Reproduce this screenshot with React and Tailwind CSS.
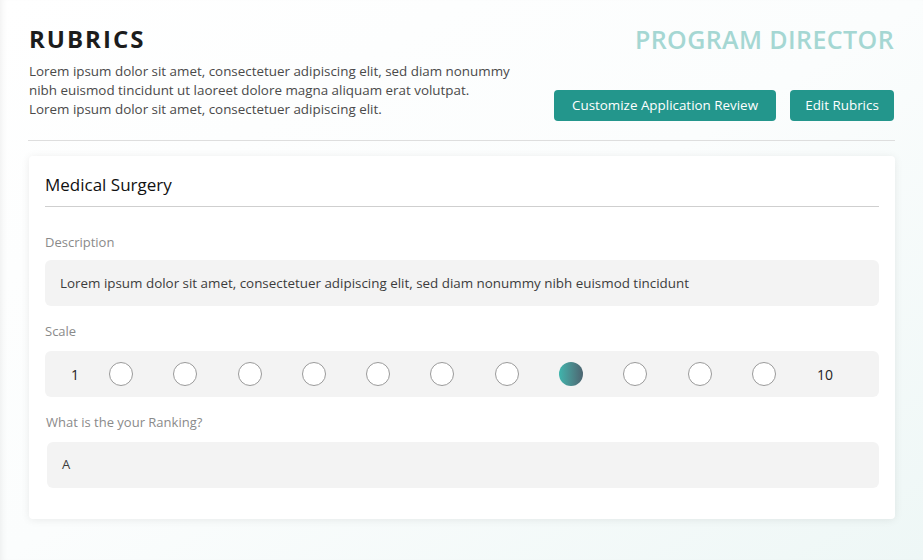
import React from "react";

const scale = [1, 2, 3, 4, 5, 6, 7, 8, 9, 10, 11];

const App = () => {
  const selected = 8;

  return (
    <div
      className="min-h-[560px] w-full bg-gradient-to-br from-white via-[#fbfdfd] to-[#eef7f6] shadow-[inset_6px_0_6px_-4px_rgba(0,0,0,0.06)]"
      style={{ fontFamily: "'Open Sans', 'Liberation Sans', sans-serif" }}
    >
      <div className="px-[28px] pt-[22px]">
        {/* Header */}
        <div className="flex justify-between">
          <div className="pl-[1px]">
            <h1 className="text-[24px] font-bold tracking-[2px] text-[#1c1c1c] leading-[34px]">
              RUBRICS
            </h1>
            <p className="mt-[6px] text-[13.4px] leading-[19px] text-[#4a4a4a] w-[520px]">
              Lorem ipsum dolor sit amet, consectetuer adipiscing elit, sed diam nonummy
              <br />
              nibh euismod tincidunt ut laoreet dolore magna aliquam erat volutpat.
              <br />
              Lorem ipsum dolor sit amet, consectetuer adipiscing elit.
            </p>
          </div>
          <div className="flex flex-col items-end pr-[1px]">
            <h2 className="text-[25px] tracking-[0.4px] font-semibold text-[#a5d7d3] leading-[34px]">
              PROGRAM DIRECTOR
            </h2>
            <div className="mt-[34px] flex gap-[14px]">
              <button className="h-[31px] w-[222px] rounded-[4px] bg-[#23968c] text-white text-[13.4px] font-medium">
                Customize Application Review
              </button>
              <button className="h-[31px] w-[104px] rounded-[4px] bg-[#23968c] text-white text-[13.4px] font-medium">
                Edit Rubrics
              </button>
            </div>
          </div>
        </div>

        <div className="mt-[19px] border-t border-[#dedede]" />

        {/* Card */}
        <div className="mt-[15px] ml-[1px] bg-white rounded-[4px] shadow-[0_1px_8px_rgba(0,0,0,0.08)] px-[16px] pt-[18px] pb-[31px]">
          <h3 className="text-[17px] font-medium text-[#111] leading-[22px]">
            Medical Surgery
          </h3>
          <div className="mt-[10px] border-t border-[#cfcfcf]" />

          <p className="mt-[26px] text-[13px] text-[#8a8a8a] leading-[18px]">Description</p>
          <div className="mt-[9px] h-[46px] rounded-[6px] bg-[#f3f3f3] flex items-center px-[15px] text-[13.4px] text-[#3c3c3c]">
            Lorem ipsum dolor sit amet, consectetuer adipiscing elit, sed diam nonummy nibh euismod tincidunt
          </div>

          <p className="mt-[16px] text-[13px] text-[#8a8a8a] leading-[18px]">Scale</p>
          <div className="mt-[11px] h-[46px] rounded-[6px] bg-[#f3f3f3] flex items-center pl-[26px] text-[14px] text-[#222]">
            <span className="w-[38px]">1</span>
            <div className="flex gap-[40.3px]">
              {scale.map((n) =>
                n === selected ? (
                  <span
                    key={n}
                    className="w-[24px] h-[24px] rounded-full bg-gradient-to-r from-[#3db5ad] to-[#4b6470]"
                  />
                ) : (
                  <span
                    key={n}
                    className="w-[24px] h-[24px] rounded-full bg-white border border-[#9a9a9a]"
                  />
                )
              )}
            </div>
            <span className="ml-[41px]">10</span>
          </div>

          <p className="mt-[16px] ml-[1px] text-[13px] text-[#8a8a8a] leading-[18px]">
            What is the your Ranking?
          </p>
          <div className="mt-[11px] ml-[2px] h-[46px] rounded-[6px] bg-[#f3f3f3] flex items-center px-[15px] text-[13px] text-[#3c3c3c]">
            A
          </div>
        </div>
      </div>
    </div>
  );
};

export default App;
